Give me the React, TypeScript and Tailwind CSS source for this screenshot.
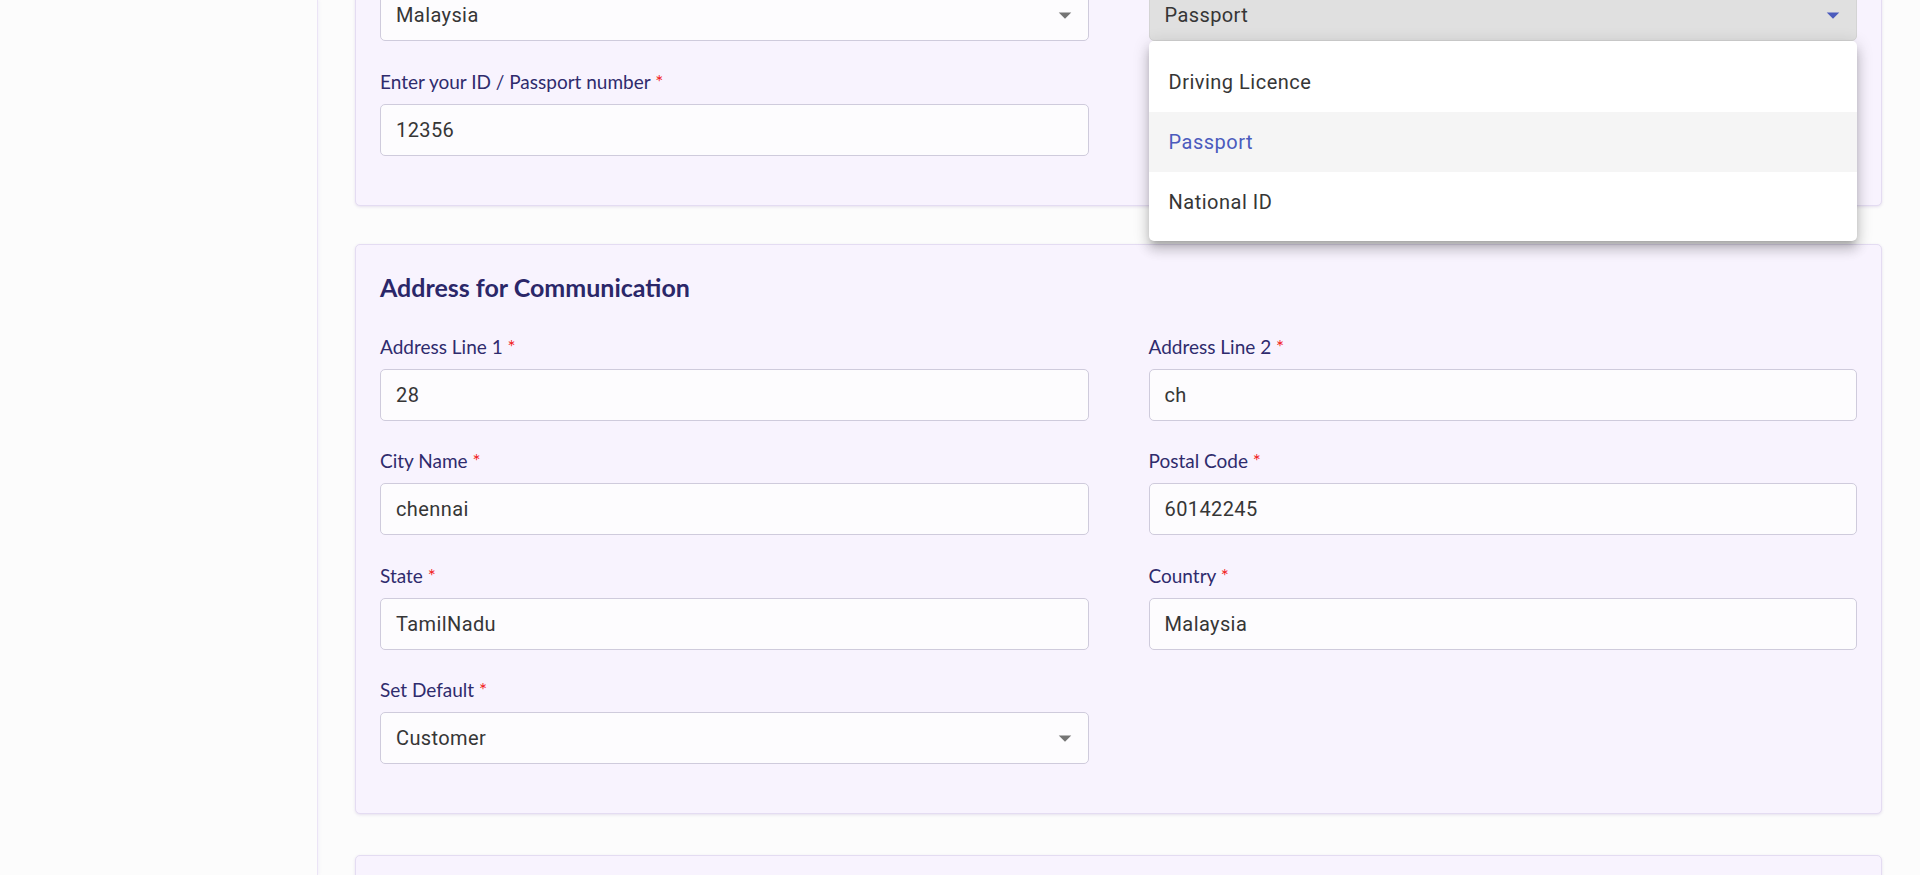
import React from 'react';

const labelFont = { fontFamily: 'Lato, "Noto Sans", sans-serif' };
const inputFont = { fontFamily: 'Roboto, "Liberation Sans", sans-serif' };

function Arrow({ blue }: { blue?: boolean }) {
  return (
    <svg width="30" height="30" viewBox="0 0 24 24" className="shrink-0">
      <path d="M7 10l5 5 5-5z" fill={blue ? '#4b5bbd' : '#757575'} />
    </svg>
  );
}

function Label({ text }: { text: string }) {
  return (
    <div className="mb-[10px] text-[19px] leading-6 text-[#2f2b6d]" style={labelFont}>
      {text} <span className="text-[#f21b1b]">*</span>
    </div>
  );
}

function Field({ label, value, select }: { label: string; value: string; select?: boolean }) {
  return (
    <div>
      <Label text={label} />
      <div
        className="flex h-[52px] items-center justify-between rounded-[5px] border border-[#cfcbdc] bg-[#fdfcfe] pl-[15px] pr-[8px] text-[20px] tracking-[0.4px] text-[#363636]"
        style={inputFont}
      >
        <span>{value}</span>
        {select && <Arrow />}
      </div>
    </div>
  );
}

function Card({ title, children, className }: { title: string; children: React.ReactNode; className?: string }) {
  return (
    <section
      className={
        'rounded-[5px] border border-[#e4dcf2] bg-[#f8f3fe] px-[24px] pt-[26px] pb-[49px] shadow-[0_1px_3px_rgba(90,60,150,0.14)] ' +
        (className || '')
      }
    >
      <h2 className="mb-8 text-[25px] font-bold leading-8 text-[#2b2769]" style={labelFont}>
        {title}
      </h2>
      <div className="grid grid-cols-2 gap-x-[60px] gap-y-[28.5px]">{children}</div>
    </section>
  );
}

const docTypes = ['Driving Licence', 'Passport', 'National ID'];

export default function App() {
  return (
    <div className="flex h-[875px] overflow-hidden bg-[#fcfcfc]">
      <aside className="w-[318px] shrink-0 border-r border-[#ebe4f6] bg-[#fcfcfc] shadow-[1px_0_3px_rgba(130,100,210,0.08)]" />
      <main className="flex-1 pl-[37px] pr-[38px]">
        <div className="-mt-[136px] flex flex-col">
          <Card title="Identity Details" className="mb-[38px]">
            <Field label="Country of Issue" value="Malaysia" select />
            <div>
              <Label text="ID Type" />
              <div className="relative">
                <div
                  className="flex h-[52px] items-center justify-between rounded-[5px] border border-[#d4d4d4] bg-[#e0e0e0] pl-[15px] pr-[8px] text-[20px] tracking-[0.4px] text-[#363636]"
                  style={inputFont}
                >
                  <span>Passport</span>
                  <Arrow blue />
                </div>
                <ul
                  className="absolute left-0 right-0 top-full z-10 rounded-[5px] bg-white pt-[11px] pb-[9px] shadow-[0_5px_6px_-3px_rgba(0,0,0,0.2),0_9px_12px_1px_rgba(0,0,0,0.14),0_3px_16px_2px_rgba(0,0,0,0.12)]"
                  style={inputFont}
                >
                  {docTypes.map((d) => (
                    <li
                      key={d}
                      className={
                        d === 'Passport'
                          ? 'flex h-[60px] items-center bg-[#f5f5f5] px-[20px] text-[20px] tracking-[0.5px] text-[#4b5bbd]'
                          : 'flex h-[60px] items-center px-[20px] text-[20px] tracking-[0.5px] text-[#363636]'
                      }
                    >
                      {d}
                    </li>
                  ))}
                </ul>
              </div>
            </div>
            <Field label="Enter your ID / Passport number" value="12356" />
          </Card>

          <Card title="Address for Communication" className="mb-[41px]">
            <Field label="Address Line 1" value="28" />
            <Field label="Address Line 2" value="ch" />
            <Field label="City Name" value="chennai" />
            <Field label="Postal Code" value="60142245" />
            <Field label="State" value="TamilNadu" />
            <Field label="Country" value="Malaysia" />
            <Field label="Set Default" value="Customer" select />
          </Card>

          <Card title="Bank Details">
            <Field label="Bank Name" value="" />
          </Card>
        </div>
      </main>
    </div>
  );
}
